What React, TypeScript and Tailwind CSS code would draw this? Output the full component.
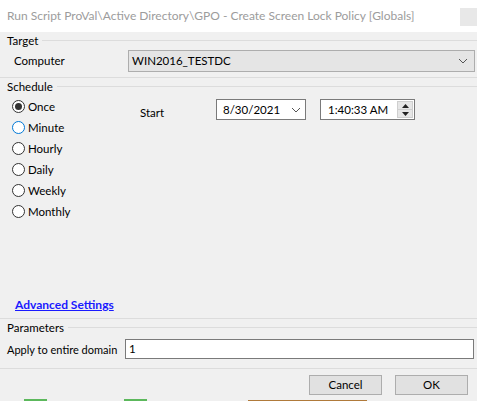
import React from "react";

const radios = ["Once", "Minute", "Hourly", "Daily", "Weekly", "Monthly"];

function Chevron() {
  return (
    <svg width="10" height="6" viewBox="0 0 10 6" className="shrink-0">
      <polyline points="1,1 5,5 9,1" fill="none" stroke="#555" strokeWidth="1" />
    </svg>
  );
}

function Radio({ label, checked, focus }: { label: string; checked?: boolean; focus?: boolean }) {
  return (
    <div className="flex h-[21px] items-center gap-[3px]">
      <div
        className={
          "flex h-[13px] w-[13px] items-center justify-center rounded-full border bg-white " +
          (focus ? "border-[#0078d7]" : "border-[#333333]")
        }
      >
        {checked && <div className="h-[7px] w-[7px] rounded-full bg-[#333333]" />}
      </div>
      <span>{label}</span>
    </div>
  );
}

function GroupLabel({ text }: { text: string }) {
  return (
    <div className="flex h-[15px] items-center">
      <span className="pl-[7px] pr-[4px] leading-[15px]">{text}</span>
      <div className="h-px flex-1 bg-[#dcdcdc]" />
    </div>
  );
}

export default function App() {
  return (
    <div className="h-[401px] w-[477px] overflow-hidden whitespace-nowrap bg-[#f0f0f0] font-['Lato',sans-serif] text-[11.5px] text-black">
      {/* title bar */}
      <div className="flex h-[32px] items-center justify-between bg-white pl-[7px]">
        <span className="text-[12px] text-[#9c9c9c]">
          Run Script ProVal\Active Directory\GPO - Create Screen Lock Policy [Globals]
        </span>
        <div className="mt-[2px] h-[18px] w-[17px] bg-[#e8e8e8]" />
      </div>

      {/* target */}
      <div className="pt-[1px]">
        <GroupLabel text="Target" />
        <div className="mt-[2px] flex h-[22px] items-center">
          <span className="w-[128px] pl-[14px]">Computer</span>
          <div className="flex h-[22px] w-[347px] items-center justify-between border border-[#adadad] bg-[#e5e5e5] pl-[3px] pr-[6px]">
            <span>WIN2016_TESTDC</span>
            <Chevron />
          </div>
        </div>
        <div className="mt-[5px] h-px bg-[#dcdcdc]" />
      </div>

      {/* schedule */}
      <div className="pt-[1px]">
        <GroupLabel text="Schedule" />
        <div className="flex">
          <div className="flex w-[140px] flex-col pl-[12px] pt-[2px]">
            {radios.map((r, i) => (
              <Radio key={r} label={r} checked={i === 0} focus={i === 1} />
            ))}
          </div>
          <div className="flex h-[22px] items-center pt-[9px]">
            <span className="w-[76px] pt-[7px]">Start</span>
            <div className="flex h-[21px] w-[90px] items-center justify-between border border-[#7a7a7a] bg-white pl-[6px] pr-[4px]">
              <span>8/30/2021</span>
              <Chevron />
            </div>
            <div className="ml-[14px] flex h-[21px] w-[95px] items-center justify-between border border-[#7a7a7a] bg-white pl-[7px] pr-[1px]">
              <span>1:40:33 AM</span>
              <div className="flex h-[17px] w-[16px] flex-col border border-[#cfcfcf] bg-[#e6e6e6]">
                <div className="flex flex-1 items-center justify-center border-b border-[#cfcfcf]">
                  <svg width="7" height="4" viewBox="0 0 7 4">
                    <polygon points="0,4 7,4 3.5,0" fill="#222" />
                  </svg>
                </div>
                <div className="flex flex-1 items-center justify-center">
                  <svg width="7" height="4" viewBox="0 0 7 4">
                    <polygon points="0,0 7,0 3.5,4" fill="#222" />
                  </svg>
                </div>
              </div>
            </div>
          </div>
        </div>
      </div>

      {/* advanced */}
      <div className="h-[96px] pl-[15px] pt-[74px]">
        <span className="text-[12px] font-bold text-[#1a1aff] underline">Advanced Settings</span>
      </div>
      <div className="h-px bg-[#dcdcdc]" />

      {/* parameters */}
      <div className="pt-[1px]">
        <GroupLabel text="Parameters" />
        <div className="mt-[4px] flex h-[20px] items-center">
          <span className="w-[125px] pl-[7px] pt-[2px] text-[11px]">Apply to entire domain</span>
          <div className="flex h-[20px] w-[349px] items-center border border-[#7a7a7a] bg-white pl-[3px]">
            1
          </div>
        </div>
        <div className="mt-[9px] h-px bg-[#dcdcdc]" />
      </div>

      {/* buttons */}
      <div className="flex justify-end gap-[13px] pr-[9px] pt-[6px]">
        <div className="flex h-[20px] w-[73px] items-center justify-center border border-[#adadad] bg-[#e1e1e1]">
          Cancel
        </div>
        <div className="flex h-[20px] w-[73px] items-center justify-center border border-[#adadad] bg-[#e1e1e1]">
          OK
        </div>
      </div>

      {/* window behind */}
      <div className="mt-[2px] flex h-[5px] items-end">
        <div className="ml-[24px] h-[3px] w-[23px] bg-[#5cb85c]" />
        <div className="ml-[77px] h-[3px] w-[23px] bg-[#5cb85c]" />
        <div className="ml-[101px] h-[2px] w-[119px] bg-[#b07a3a]" />
      </div>
    </div>
  );
}
